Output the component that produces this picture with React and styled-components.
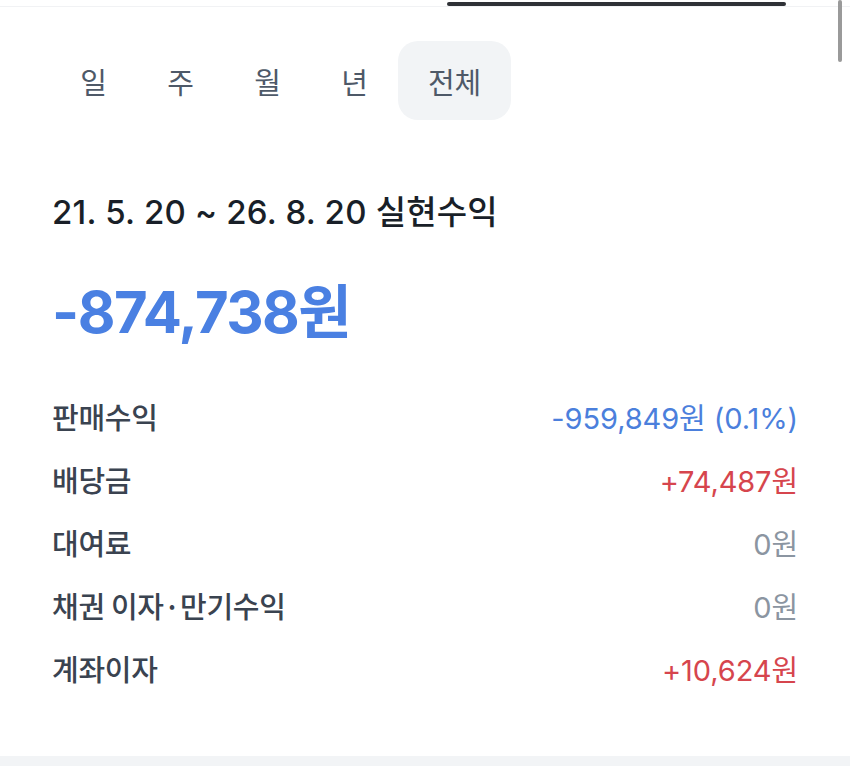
import React from "react";
import styled, { createGlobalStyle } from "styled-components";

const Global = createGlobalStyle`
  html, body { margin: 0; padding: 0; background: #ffffff; }
  body {
    font-family: "Inter", "Noto Sans CJK KR", "Noto Sans", sans-serif;
    overflow: hidden;
    -webkit-font-smoothing: antialiased;
  }
`;

const Page = styled.div`
  position: relative;
  width: 850px;
  height: 766px;
  background: #ffffff;
  display: flex;
  flex-direction: column;
  overflow: hidden;
`;

const TopBar = styled.div`
  height: 6px;
  border-bottom: 1px solid #f1f2f4;
  display: flex;
  align-items: flex-start;
`;

const Indicator = styled.div`
  margin-left: 447px;
  margin-top: 2px;
  width: 339px;
  height: 4px;
  border-radius: 2px;
  background: #2f3136;
`;

const Scrollbar = styled.div`
  position: absolute;
  right: 8px;
  top: 0;
  width: 4px;
  height: 62px;
  border-radius: 2px;
  background: #9a9a9a;
`;

const Tabs = styled.div`
  display: flex;
  margin: 34px 0 0 50px;
`;

const Tab = styled.div`
  width: ${(p) => (p.$wide ? 113 : 87)}px;
  height: 79px;
  display: flex;
  align-items: center;
  justify-content: center;
  border-radius: 20px;
  background: ${(p) => (p.$active ? "#f2f4f6" : "transparent")};
  color: #4e5968;
  font-family: "Noto Sans CJK KR", sans-serif;
  font-size: 29px;
  font-weight: 400;
  letter-spacing: -0.3px;
`;

const Content = styled.div`
  padding: 0 52px;
  display: flex;
  flex-direction: column;
`;

const Title = styled.div`
  margin-top: 72px;
  font-size: 33px;
  line-height: 40px;
  font-weight: 500;
  color: #191f28;
  letter-spacing: 0.2px;
`;

const Amount = styled.div`
  margin-top: 44px;
  font-size: 58px;
  line-height: 72px;
  font-weight: 700;
  color: #4a80e2;
  letter-spacing: -1.5px;
`;

const Rows = styled.div`
  margin-top: 36px;
  display: flex;
  flex-direction: column;
`;

const Row = styled.div`
  height: 63px;
  display: flex;
  align-items: center;
  justify-content: space-between;
`;

const Label = styled.span`
  color: #3a4350;
  font-family: "Noto Sans CJK KR", sans-serif;
  font-size: 29px;
  font-weight: 500;
  letter-spacing: -0.3px;
`;

const colors = { blue: "#4b7fdc", red: "#d6454d", gray: "#8b95a1" };

const Value = styled.span`
  color: ${(p) => colors[p.$tone]};
  font-size: 29px;
  font-weight: 400;
  letter-spacing: -0.1px;
`;

const BottomBand = styled.div`
  margin-top: auto;
  height: 10px;
  background: #f2f4f6;
`;

const tabs = ["일", "주", "월", "년", "전체"];
const rows = [
  ["판매수익", "-959,849원 (0.1%)", "blue"],
  ["배당금", "+74,487원", "red"],
  ["대여료", "0원", "gray"],
  ["채권 이자·만기수익", "0원", "gray"],
  ["계좌이자", "+10,624원", "red"],
];

export default function App() {
  return (
    <Page>
      <Global />
      <TopBar>
        <Indicator />
      </TopBar>
      <Scrollbar />
      <Tabs>
        {tabs.map((t) => (
          <Tab key={t} $active={t === "전체"} $wide={t.length > 1}>
            {t}
          </Tab>
        ))}
      </Tabs>
      <Content>
        <Title>21. 5. 20 ~ 26. 8. 20 실현수익</Title>
        <Amount>-874,738원</Amount>
        <Rows>
          {rows.map(([l, v, tone]) => (
            <Row key={l}>
              <Label>{l}</Label>
              <Value $tone={tone}>{v}</Value>
            </Row>
          ))}
        </Rows>
      </Content>
      <BottomBand />
    </Page>
  );
}
